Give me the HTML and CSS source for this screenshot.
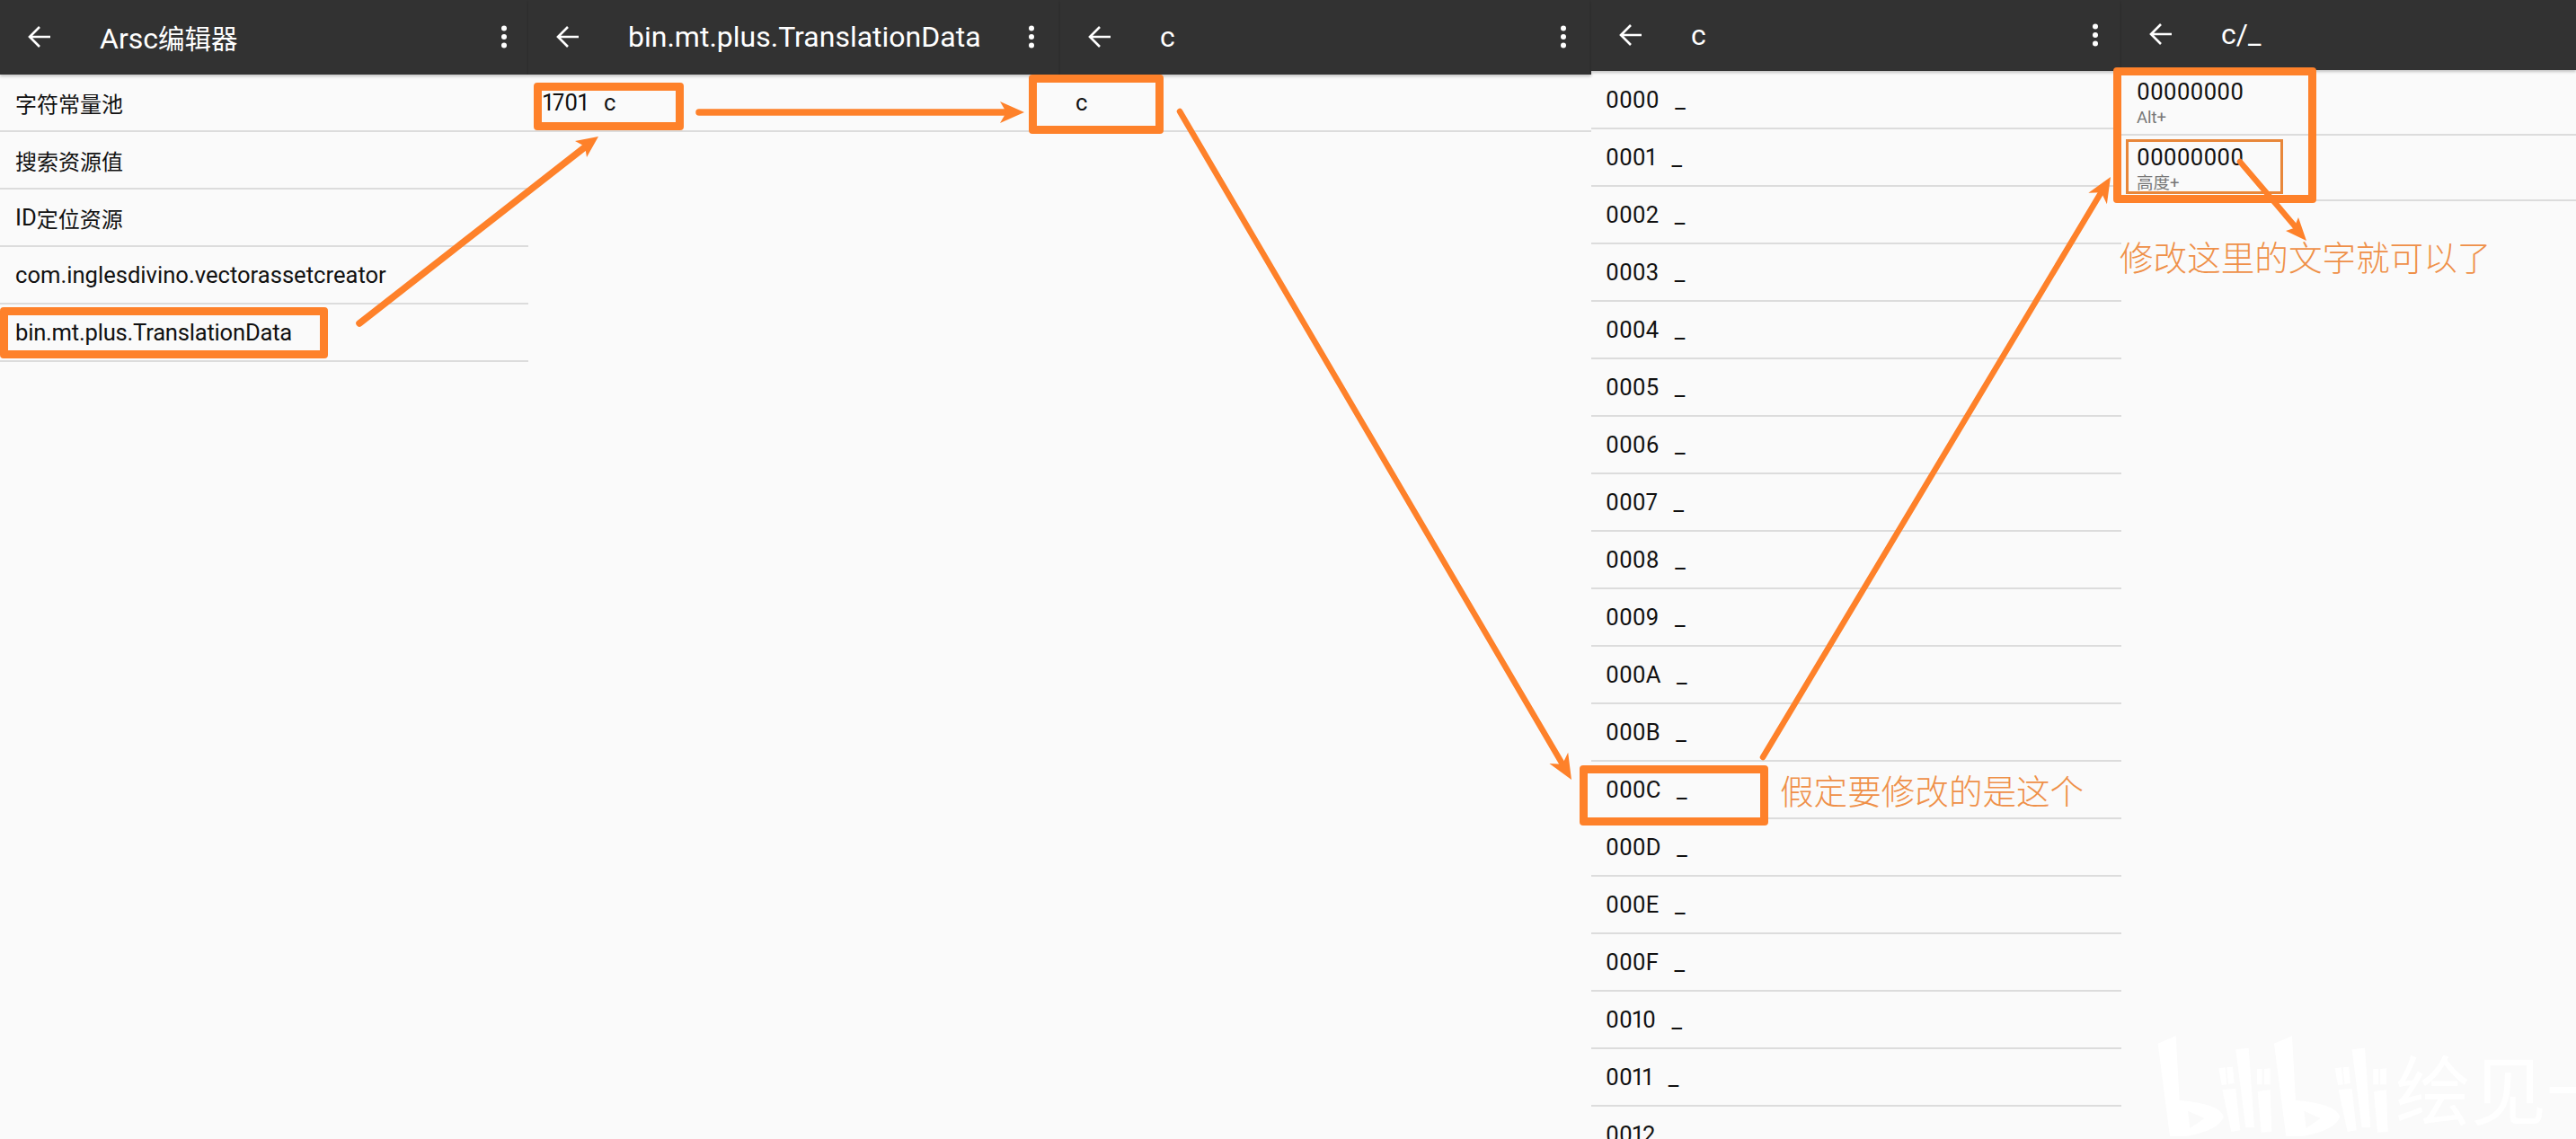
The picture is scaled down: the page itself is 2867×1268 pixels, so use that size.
FILE: index.html
```html
<!DOCTYPE html>
<html lang="zh">
<head>
<meta charset="utf-8">
<title>Arsc编辑器</title>
<link rel="stylesheet" href="styles.css">
</head>
<body>
<svg width="0" height="0" class="defs">
  <symbol id="back" viewBox="0 0 26 26"><path d="M25 13H2M13 2 2 13l11 11" fill="none" stroke="#fff" stroke-width="2.6"/></symbol>
  <symbol id="more" viewBox="0 0 8 26"><circle cx="4" cy="3.5" r="3"/><circle cx="4" cy="13" r="3"/><circle cx="4" cy="22.5" r="3"/></symbol>
</svg>
<main class="canvas">
  <section class="panel p1">
    <header class="bar"><svg class="back"><use href="#back"/></svg><h1 class="title">Arsc<span class="zh">编辑器</span></h1><svg class="more"><use href="#more"/></svg></header>
    <ul class="list">
      <li class="row"><span class="zh">字符常量池</span></li>
      <li class="row"><span class="zh">搜索资源值</span></li>
      <li class="row">ID<span class="zh">定位资源</span></li>
      <li class="row">com.inglesdivino.vectorassetcreator</li>
      <li class="row tight">bin.mt.plus.TranslationData</li>
    </ul>
  </section>
  <section class="panel p2">
    <header class="bar"><svg class="back"><use href="#back"/></svg><h1 class="title">bin.mt.plus.TranslationData</h1><svg class="more"><use href="#more"/></svg></header>
    <ul class="list"><li class="row">1701  c</li></ul>
  </section>
  <section class="panel p3">
    <header class="bar"><svg class="back"><use href="#back"/></svg><h1 class="title">c</h1><svg class="more"><use href="#more"/></svg></header>
    <ul class="list"><li class="row">c</li></ul>
  </section>
  <section class="panel p4">
    <header class="bar"><svg class="back"><use href="#back"/></svg><h1 class="title">c</h1><svg class="more"><use href="#more"/></svg></header>
    <ul class="list">
      <li class="row">0000  _</li><li class="row">0001  _</li><li class="row">0002  _</li><li class="row">0003  _</li>
      <li class="row">0004  _</li><li class="row">0005  _</li><li class="row">0006  _</li><li class="row">0007  _</li>
      <li class="row">0008  _</li><li class="row">0009  _</li><li class="row">000A  _</li><li class="row">000B  _</li>
      <li class="row">000C  _</li><li class="row">000D  _</li><li class="row">000E  _</li><li class="row">000F  _</li>
      <li class="row">0010  _</li><li class="row">0011  _</li><li class="row">0012  _</li>
    </ul>
  </section>
  <section class="panel p5">
    <header class="bar"><svg class="back"><use href="#back"/></svg><h1 class="title">c/_</h1></header>
    <ul class="list">
      <li class="entry"><span class="val">00000000</span><span class="sub">Alt+</span></li>
      <li class="entry"><span class="val">00000000</span><span class="sub">高度+</span></li>
    </ul>
  </section>

  <div class="box b1"></div>
  <div class="box b2"></div>
  <div class="box b3"></div>
  <div class="box b4"></div>
  <div class="box b5"></div>
  <div class="box thin"></div>

  <svg class="overlay" viewBox="0 0 2867 1268">
    <g class="arrow">
      <line class="wide" x1="400" y1="360" x2="652" y2="163"/>
      <polygon points="666,152 640,157 651,163 653,175"/>
      <line class="wide" x1="778" y1="125" x2="1122" y2="125"/>
      <polygon points="1140,125 1113,113 1120,125 1113,137"/>
      <line x1="1313" y1="124" x2="1738" y2="849"/>
      <polygon points="1749,868 1745.2,837.7 1738.9,850.7 1724.4,849.9"/>
      <line x1="1962" y1="843" x2="2338" y2="215"/>
      <polygon points="2349,197 2344.9,227.2 2338.7,214.2 2324.3,214.8"/>
      <line x1="2493" y1="180" x2="2556" y2="254"/>
      <polygon points="2567,268 2544,257 2553,254 2558,242"/>
    </g>
    <g class="mark" transform="translate(2360 1120) scale(.3333)">
      <g id="bili">
        <path fill-rule="evenodd" d="M125 125 185 100 197 315Q330 325 345 370 330 415 220 435L165 435ZM225 350 280 375 232 408Z"/>
        <path d="M340 280 385 275 400 415 370 420ZM328 208 350 205 355 262 338 264ZM355 205 375 203 380 258 360 260ZM385 145 428 140 447 405 418 405ZM458 285 500 280 505 420 470 422ZM456 210 473 210 473 262 456 262ZM480 210 500 208 500 262 480 262Z"/>
      </g>
      <use href="#bili" x="388"/>
    </g>
  </svg>

  <p class="note note-a">假定要修改的是这个</p>
  <p class="note note-b">修改这里的文字就可以了</p>
  <p class="wm">绘见一</p>
</main>
</body>
</html>
```
FILE: styles.css
```css
* { box-sizing: border-box; }
html, body { margin: 0; padding: 0; background: #fafafa; }
.defs { position: absolute; }
.canvas {
  position: relative;
  display: flex;
  width: 2867px;
  height: 1268px;
  overflow: hidden;
  background: #fafafa;
  font-family: Roboto, "Noto Sans CJK SC", sans-serif;
  font-variant-numeric: proportional-nums;
  color: #111;
}
.panel { flex: none; display: flex; flex-direction: column; }
.p1 { width: 588px; }
.p2 { width: 592px; }
.p3 { width: 591px; }
.p4 { width: 590px; }
.p5 { width: 506px; }

.bar {
  position: relative;
  flex: none;
  display: flex;
  align-items: center;
  height: 83px;
  padding: 0 0 2px 31px;
  background: #323232;
  box-shadow: 0 2px 3px rgba(0,0,0,.22);
}
.p4 .bar { height: 79px; }
.p5 .bar { height: 78px; }
.back { flex: none; width: 26px; height: 26px; }
.title {
  flex: 1;
  margin: 0 0 0 54px;
  color: #fff;
  font-size: 32px;
  font-weight: 400;
  white-space: pre;
}
.title .zh { font-size: 29.5px; }
.more { flex: none; width: 8px; height: 26px; margin-right: 23px; fill: #fff; }
.p2 .more { margin-right: 28px; }
.p3 .more { margin-right: 27px; }
.p4 .more { margin-right: 25px; }

.list { margin: 0; padding: 0; list-style: none; }
.p4 .list { padding-top: 1px; }
.row {
  display: flex;
  align-items: center;
  height: 64px;
  padding-left: 17px;
  border-bottom: 2px solid #dcdcdc;
  font-size: 25.6px;
  word-spacing: 2.5px;
  white-space: pre;
}
.row.tight { letter-spacing: -.22px; }
.p2 .row, .p4 .row { padding-left: 16px; }
.row .zh { font-size: 24px; }
.entry {
  display: flex;
  flex-direction: column;
  height: 73px;
  padding: 9px 0 0 17px;
  border-bottom: 2px solid #dcdcdc;
}
.val { font-size: 25.6px; line-height: 30px; }
.sub { margin-top: 4px; font-size: 18.5px; line-height: 20px; color: #777; }

.box { position: absolute; border: 9px solid #fe812a; border-radius: 4px; }
.b1 { left: 0; top: 342px; width: 365px; height: 57px; }
.b2 { left: 594px; top: 92px; width: 167px; height: 53px; }
.b3 { left: 1145px; top: 83px; width: 150px; height: 66px; }
.b4 { left: 1758px; top: 852px; width: 210px; height: 67px; }
.b5 { left: 2352px; top: 75px; width: 226px; height: 151px; }
.thin { left: 2366px; top: 155px; width: 175px; height: 61px; border: 3px solid #e8873a; border-radius: 0; }

.overlay { position: absolute; left: 0; top: 0; width: 2867px; height: 1268px; pointer-events: none; }
.arrow line { stroke: #fe812a; stroke-width: 6.5; stroke-linecap: round; }
.arrow .wide { stroke-width: 7.5; }
.arrow polygon { fill: #fe812a; }
.mark { fill: #fff; }

.note {
  position: absolute;
  margin: 0;
  color: #ef9048;
  font-family: "Noto Sans CJK SC", sans-serif;
  font-weight: 300;
  font-size: 37.6px;
  line-height: 44px;
  white-space: nowrap;
}
.note-a { left: 1981px; top: 857px; }
.note-b { left: 2359px; top: 263px; }
.wm {
  position: absolute;
  left: 2666px;
  top: 1160px;
  margin: 0;
  color: #fff;
  font-family: "Noto Sans CJK SC", sans-serif;
  font-size: 84px;
  line-height: 100px;
  white-space: nowrap;
}
```
